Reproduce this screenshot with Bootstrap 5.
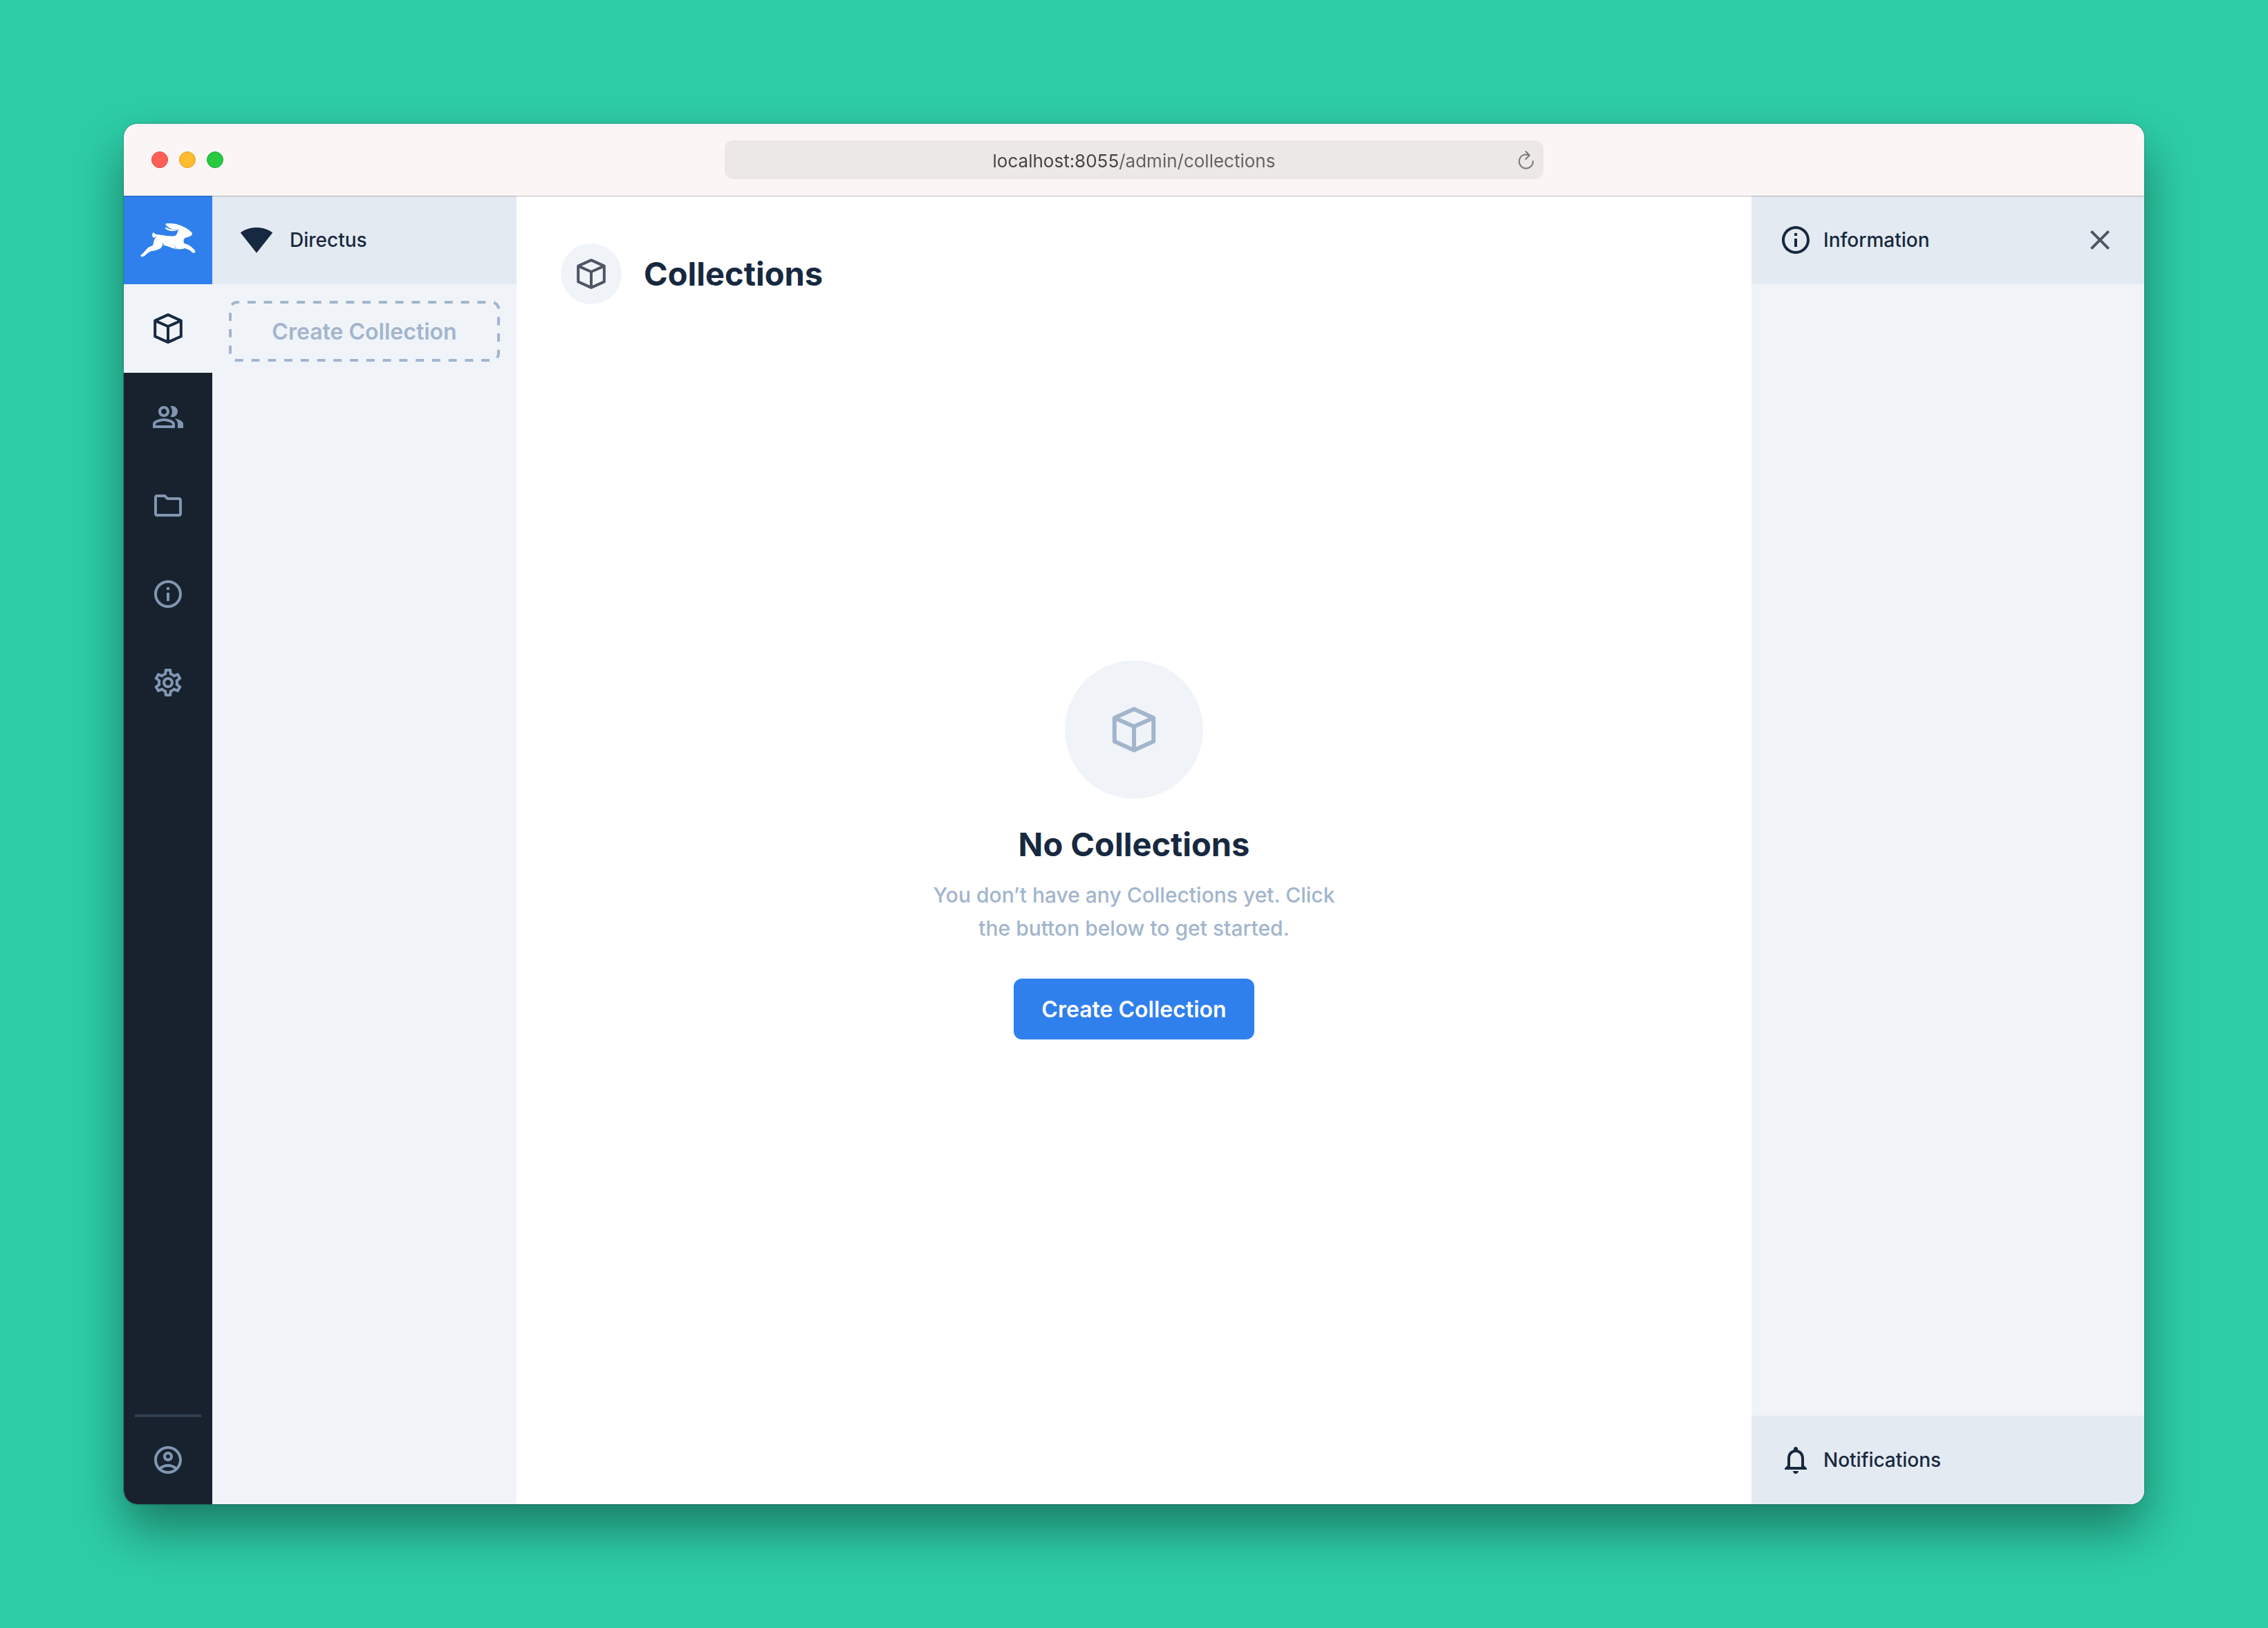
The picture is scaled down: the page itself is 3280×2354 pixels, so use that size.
<!DOCTYPE html>
<html lang="en">
<head>
<meta charset="utf-8">
<meta name="viewport" content="width=device-width, initial-scale=1">
<title>Collections</title>
<link href="https://cdn.jsdelivr.net/npm/bootstrap@5.3.0/dist/css/bootstrap.min.css" rel="stylesheet">
<style>
:root{--ink:#172940;--muted-ink:#a2b5cd;--panel:#f0f4f9;--panel-head:#e4eaf1;--brand:#2f80ed;--rail:#18222f}
body{background:#2dcda7;color:var(--ink);font-family:Inter,"Liberation Sans",sans-serif;font-size:28px;line-height:48px;font-weight:500;padding:179px}
.body-frame{min-height:calc(100vh - 358px)}
.app-window{border-radius:20px;background:#fff;box-shadow:0 0 2px rgba(0,0,0,.6),0 36px 72px rgba(0,0,0,.4)}
.title-bar{height:104px;padding:0 40px;background:#fbf5f5;box-shadow:0 1px 0 rgba(0,0,0,.19),0 2px 0 rgba(0,0,0,.04);z-index:1}
.side-slot{flex:1 1 0}
.light{width:24px;height:24px;border-radius:50%;border:1px solid;padding:0}
.light-red{background:#ff5f57;border-color:#e2453f}
.light-amber{background:#febc2e;border-color:#e0a01f}
.light-green{background:#28c840;border-color:#1bac2c}
.address{flex:0 1 1184px;height:56px;border-radius:12px;background:#ede8e8;padding:0 13px}
.address input{height:56px;font-size:26px;font-weight:400;text-align:center;color:#4a4747;background:linear-gradient(90deg,#434141 calc(50% - 8px),#636060 0);-webkit-background-clip:text;background-clip:text;-webkit-text-fill-color:transparent;outline:0;padding:2px 0 0 24px}
.address button{color:#7b7777}
.ico{width:48px;height:48px;fill:currentColor;flex:none;display:block}
.cube{fill:none;stroke:currentColor;stroke-width:2;stroke-linejoin:round}
.bare{border:0;background:none;padding:0;color:inherit}
.rail{flex:0 0 128px;background:var(--rail)}
.rail a{height:128px;color:#8196b1}
.rail a.logo-tile{background:var(--brand);color:#fff}
.rail a.active{background:var(--panel);color:var(--ink)}
.rail hr{width:96px;height:4px;border:0;opacity:1;background:#304050;margin:0 auto -2px}
.nav-panel{flex:0 0 440px;background:var(--panel)}
.info-panel{flex:0 0 568px;background:var(--panel)}
.panel-head{height:128px;padding:0 40px;background:var(--panel-head)}
.nav-body{padding:24px}
.act{height:88px;border:0;border-radius:12px;font-size:32px;line-height:48px;font-weight:600;padding:2px 40px 0}
.act-ghost{color:var(--muted-ink);background:none}
.act-ghost svg{fill:none;stroke:currentColor;stroke-width:4;stroke-dasharray:12 12;stroke-dashoffset:9}
.act-ghost rect{width:calc(100% - 4px);height:calc(100% - 4px)}
.act-main{background:var(--brand);color:#fff}
.page-head{height:226px;padding:0 64px;gap:32px}
.head-disc{width:88px;height:88px;background:var(--panel);color:#4f5464}
h1,h2{font-size:47px;line-height:64px;font-weight:700;margin:0;color:var(--ink)}
.empty{padding-bottom:226px}
.empty-disc{width:200px;height:200px;background:var(--panel);color:var(--muted-ink)}
.empty-disc .ico{width:72px;height:72px}
.empty h2{margin-top:34px}
.empty p{font-size:30px;color:var(--muted-ink);max-width:624px;margin:17px 0 49px}
.close-x{color:#4f5464}
</style>
</head>
<body>
<svg class="d-none" aria-hidden="true">
  <symbol id="box" viewBox="0 0 24 24"><path d="M12 2.1l9.4 4.2v11.4L12 21.9l-9.4-4.2V6.3zM2.6 6.3L12 10.5l9.4-4.2M12 10.5v11.4"/></symbol>
  <symbol id="info" viewBox="0 0 24 24"><path d="M11 7h2v2h-2zm0 4h2v6h-2zm1-9C6.48 2 2 6.48 2 12s4.48 10 10 10 10-4.48 10-10S17.52 2 12 2zm0 18c-4.41 0-8-3.59-8-8s3.59-8 8-8 8 3.59 8 8-3.59 8-8 8z"/></symbol>
</svg>
<div class="body-frame d-flex">
<div class="app-window flex-grow-1 d-flex flex-column overflow-hidden">
  <header class="title-bar d-flex align-items-center position-relative">
    <div class="side-slot d-flex gap-3">
      <button class="light light-red" type="button" aria-label="Close"></button>
      <button class="light light-amber" type="button" aria-label="Minimize"></button>
      <button class="light light-green" type="button" aria-label="Zoom"></button>
    </div>
    <div class="address d-flex align-items-center">
      <input class="border-0 flex-grow-1" type="text" aria-label="Address" value="localhost:8055/admin/collections">
      <button class="bare" type="button" aria-label="Reload">
        <svg class="d-block" width="24" height="28" viewBox="0 0 24 28" fill="none" stroke="currentColor" stroke-width="2" stroke-linecap="round" stroke-linejoin="round"><path d="M16 7.3A10 10 0 1 0 22 16M11.500 2L17 7.500l-5.500 5.500"/></svg>
      </button>
    </div>
    <div class="side-slot"></div>
  </header>

  <div class="flex-grow-1 d-flex">
    <nav class="rail d-flex flex-column" aria-label="Modules">
      <a class="logo-tile d-flex align-items-center justify-content-center" href="#" aria-label="Home">
        <svg width="80" height="50" viewBox="98 141 240 150">
          <path fill="#aaccf8" d="M204 165C206 160 215 162 225 168L264 164L262 172C250 179 224 182 204 165ZM240 232L262 257L250 255L232 247Z"/>
          <path fill="#fff" d="M208 150C206 146 210 144 216 144C240 143 258 147 272 153C292 161 313 173 322 185C326 193 318 200 306 203C291 205 286 210 286 219V230C302 232 325 247 336 263C338 271 329 276 322 269C313 259 302 256 291 252C280 256 268 257 259 254C250 249 246 241 244 234C243 242 245 249 250 254C232 252 220 241 199 239L196 226Q195 237 193 242C188 255 167 262 146 264C130 270 124 279 115 286C108 290 100 289 99 284C99 280 105 278 110 273L125 256C132 247 141 243 151 241C156 233 155 215 165 204C171 202 173 202 173 202C166 201 160 203 158 207C151 205 149 200 150 193C149 186 153 182 156 184C158 190 168 193 177 193C200 197 223 200 246 199C257 196 260 180 264 167C254 171 243 170 233 167C222 163 212 158 208 150Z"/>
          <path fill="#fff" d="M204 164C206 161 213 165 222 169C234 174 246 174 260 171C247 180 222 180 204 164Z"/>
        </svg>
      </a>
      <a class="active d-flex align-items-center justify-content-center" href="#" aria-label="Collections" aria-current="page"><svg class="ico cube"><use href="#box"/></svg></a>
      <a class="d-flex align-items-center justify-content-center" href="#" aria-label="Users"><svg class="ico" viewBox="0 0 24 24"><path d="M16.670 13.130C18.040 14.060 19 15.320 19 17v3h4v-3c0-2.180-3.570-3.470-6.330-3.870zM15 12c2.210 0 4-1.790 4-4s-1.790-4-4-4c-.47 0-.91.1-1.330.24C14.500 5.270 15 6.580 15 8s-.5 2.730-1.330 3.760c.42.14.86.24 1.330.24zM9 12c2.210 0 4-1.790 4-4s-1.790-4-4-4-4 1.790-4 4 1.790 4 4 4zm0-6c1.100 0 2 .9 2 2s-.9 2-2 2-2-.9-2-2 .9-2 2-2zM9 13c-2.670 0-8 1.340-8 4v3h16v-3c0-2.660-5.330-4-8-4zm6 5H3v-.99C3.200 16.290 6.300 15 9 15s5.800 1.290 6 2v1z"/></svg></a>
      <a class="d-flex align-items-center justify-content-center" href="#" aria-label="Files"><svg class="ico" viewBox="0 0 24 24"><path d="M9.170 6l2 2H20v10H4V6h5.170M10 4H4c-1.100 0-1.990.9-1.990 2L2 18c0 1.100.9 2 2 2h16c1.100 0 2-.9 2-2V8c0-1.100-.9-2-2-2h-8l-2-2z"/></svg></a>
      <a class="d-flex align-items-center justify-content-center" href="#" aria-label="Documentation"><svg class="ico"><use href="#info"/></svg></a>
      <a class="d-flex align-items-center justify-content-center" href="#" aria-label="Settings"><svg class="ico" viewBox="0 0 24 24"><path d="M19.430 12.980c.04-.32.07-.64.07-.98s-.03-.66-.07-.98l2.110-1.650c.19-.15.24-.42.12-.64l-2-3.460c-.09-.16-.26-.25-.44-.25-.06 0-.12.01-.17.03l-2.490 1c-.52-.4-1.080-.73-1.690-.98l-.38-2.650C14.460 2.180 14.250 2 14 2h-4c-.25 0-.46.18-.49.42l-.38 2.650c-.61.25-1.170.59-1.690.98l-2.490-1c-.06-.02-.12-.03-.18-.03-.17 0-.34.09-.43.25l-2 3.460c-.13.22-.07.49.12.64l2.110 1.650c-.04.32-.07.65-.07.98s.03.66.07.98l-2.110 1.650c-.19.15-.24.42-.12.64l2 3.460c.09.16.26.25.44.25.06 0 .12-.01.17-.03l2.490-1c.52.4 1.080.73 1.690.98l.38 2.650c.03.24.24.42.49.42h4c.25 0 .46-.18.49-.42l.38-2.650c.61-.25 1.170-.59 1.690-.98l2.490 1c.06.02.12.03.18.03.17 0 .34-.09.43-.25l2-3.460c.12-.22.07-.49-.12-.64l-2.110-1.650zm-1.980-1.710c.04.31.05.52.05.73 0 .21-.02.43-.05.73l-.14 1.130.89.7 1.080.84-.7 1.210-1.270-.51-1.040-.42-.9.68c-.43.32-.84.56-1.250.73l-1.060.43-.16 1.130-.2 1.350h-1.400l-.19-1.350-.16-1.130-1.060-.43c-.43-.18-.83-.41-1.230-.71l-.91-.7-1.060.43-1.270.51-.7-1.210 1.080-.84.89-.7-.14-1.130c-.03-.31-.05-.54-.05-.74s.02-.43.05-.73l.14-1.130-.89-.7-1.080-.84.7-1.210 1.270.51 1.040.42.9-.68c.43-.32.84-.56 1.250-.73l1.060-.43.16-1.130.2-1.350h1.390l.19 1.350.16 1.130 1.060.43c.43.18.83.41 1.230.71l.91.7 1.060-.43 1.270-.51.7 1.210-1.070.85-.89.7.14 1.130zM12 8c-2.210 0-4 1.790-4 4s1.790 4 4 4 4-1.790 4-4-1.790-4-4-4zm0 6c-1.100 0-2-.9-2-2s.9-2 2-2 2 .9 2 2-.9 2-2 2z"/></svg></a>
      <div class="mt-auto">
        <hr>
        <a class="d-flex align-items-center justify-content-center" href="#" aria-label="Account"><svg class="ico" viewBox="0 0 24 24"><path d="M12 2C6.480 2 2 6.480 2 12s4.480 10 10 10 10-4.480 10-10S17.520 2 12 2zM7.350 18.500C8.660 17.560 10.260 17 12 17s3.340.56 4.650 1.500c-1.310.94-2.910 1.500-4.650 1.500s-3.340-.56-4.650-1.500zm10.790-1.380C16.450 15.800 14.320 15 12 15s-4.450.8-6.140 2.120C4.700 15.730 4 13.950 4 12c0-4.420 3.580-8 8-8s8 3.580 8 8c0 1.950-.7 3.730-1.860 5.120zM12 6c-1.930 0-3.500 1.570-3.500 3.500S10.070 13 12 13s3.500-1.570 3.500-3.500S13.930 6 12 6zm0 5c-.83 0-1.500-.67-1.500-1.500S11.170 8 12 8s1.500.67 1.500 1.500S12.830 11 12 11z"/></svg></a>
      </div>
    </nav>

    <aside class="nav-panel">
      <div class="panel-head d-flex align-items-center gap-4">
        <svg class="ico" viewBox="0 0 24 24"><path d="M12 21.400L.4 6.700C3.500 4.300 7.600 3 12 3s8.500 1.300 11.600 3.700z"/></svg>
        <span>Directus</span>
      </div>
      <div class="nav-body">
        <button class="act act-ghost w-100 position-relative" type="button">
          <svg class="position-absolute top-0 start-0 w-100 h-100" aria-hidden="true"><rect x="2" y="2" rx="10" pathLength="936"/></svg>Create Collection</button>
      </div>
    </aside>

    <main class="flex-grow-1 d-flex flex-column">
      <div class="page-head d-flex align-items-center">
        <span class="head-disc rounded-circle d-flex align-items-center justify-content-center"><svg class="ico cube"><use href="#box"/></svg></span>
        <h1>Collections</h1>
      </div>
      <section class="empty flex-grow-1 d-flex flex-column align-items-center justify-content-center text-center">
        <span class="empty-disc rounded-circle d-flex align-items-center justify-content-center"><svg class="ico cube"><use href="#box"/></svg></span>
        <h2>No Collections</h2>
        <p>You don’t have any Collections yet. Click the button below to get started.</p>
        <button class="act act-main" type="button">Create Collection</button>
      </section>
    </main>

    <aside class="info-panel d-flex flex-column">
      <div class="panel-head d-flex align-items-center gap-3">
        <svg class="ico"><use href="#info"/></svg>
        <span>Information</span>
        <button class="bare close-x ms-auto" type="button" aria-label="Close panel"><svg class="ico" viewBox="0 0 24 24"><path d="M19 6.410L17.590 5 12 10.590 6.410 5 5 6.410 10.590 12 5 17.590 6.410 19 12 13.410 17.590 19 19 17.590 13.410 12z"/></svg></button>
      </div>
      <div class="panel-head d-flex align-items-center gap-3 mt-auto">
        <svg class="ico" viewBox="0 0 24 24"><path d="M12 22c1.100 0 2-.9 2-2h-4c0 1.100.9 2 2 2zm6-6v-5c0-3.070-1.630-5.640-4.500-6.320V4c0-.83-.67-1.500-1.500-1.500s-1.500.67-1.500 1.500v.68C7.640 5.360 6 7.920 6 11v5l-2 2v1h16v-1l-2-2zm-2 1H8v-6c0-2.480 1.510-4.500 4-4.500s4 2.020 4 4.500v6z"/></svg>
        <span>Notifications</span>
      </div>
    </aside>
  </div>
</div>
</div>
<script src="https://cdn.jsdelivr.net/npm/bootstrap@5.3.0/dist/js/bootstrap.bundle.min.js"></script>
</body>
</html>
